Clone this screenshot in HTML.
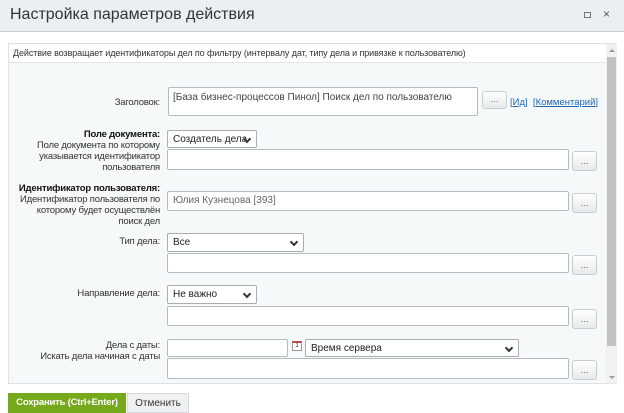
<!DOCTYPE html><html><head><meta charset="utf-8"><style>
*{box-sizing:border-box;margin:0;padding:0}
body{width:624px;height:409px;overflow:hidden;background:#fff;font-family:"Liberation Sans",sans-serif;font-size:11px;color:#333;position:relative}
.a{position:absolute}
.hd{left:0;top:0;width:624px;height:32px;background:#eaeff1;border-bottom:1px solid #c9d0d3}
.ttl{left:10px;top:6px;font-size:16px;color:#333}
.panel{left:8px;top:43px;width:609px;height:341px;background:#f6f9f9;border:1px solid #dfe3e5}
.desc{left:0;top:0;width:597px;height:19px;background:#fff;border-bottom:1px solid #e2e6e8;font-size:9px;padding:4px 4px;color:#333;letter-spacing:-0.1px}
.ta{background:#fff;border:1px solid #b5bcc0;border-radius:2px}
.sel{background:#fff;border:1px solid #a8aeb2;border-radius:2px;font-size:10px;padding:3px 5px;color:#222}
.sel:after{content:"";position:absolute;right:6px;top:5px;width:4px;height:4px;border-right:2px solid #333;border-bottom:2px solid #333;transform:rotate(45deg)}
.btn{background:linear-gradient(#fff,#e6e9ea);border:1px solid #c8cdd0;border-radius:3px;font-size:9px;text-align:center;color:#666;line-height:14px}
.lb{text-align:right;font-size:9.5px;line-height:11px;color:#333;width:144px;left:16px;letter-spacing:-0.2px}
b{color:#111}
</style></head><body>
<div class="a hd"></div>
<div class="a ttl">Настройка параметров действия</div>
<div class="a" style="left:584px;top:12px;width:7px;height:6px;border:1px solid #777"></div>
<div class="a" style="left:603px;top:7px;font-size:12px;color:#555">×</div>
<div class="a panel">
<div class="a desc">Действие возвращает идентификаторы дел по фильтру (интервалу дат, типу дела и привязке к пользователю)</div>
<div class="a" style="left:597px;top:0;width:11px;height:339px;background:#f1f1f1"></div>
<div class="a" style="left:598px;top:13px;width:9px;height:289px;background:#c1c1c1"></div>
<div class="a" style="left:600px;top:5px;border:3px solid transparent;border-bottom:3px solid #999;border-top:0"></div>
<div class="a" style="left:600px;top:332px;border:3px solid transparent;border-top:3px solid #999;border-bottom:0"></div>
</div>
<div class="a lb" style="top:97px">Заголовок:</div>
<div class="a ta" style="left:168px;top:87px;width:310px;height:29px;padding:4px;font-size:10px;color:#444">[База бизнес-процессов Пинол] Поиск дел по пользователю</div>
<div class="a btn" style="left:482px;top:91px;width:25px;height:18px">...</div>
<div class="a" style="left:510px;top:97px;font-size:9.5px;color:#2067b0">[<u>Ид</u>] &nbsp;[<u>Комментарий</u>]</div>

<div class="a lb" style="top:129px"><b>Поле документа:</b><br>Поле документа по которому указывается идентификатор пользователя</div>
<div class="a sel" style="left:167px;top:130px;width:90px;height:18px">Создатель дела</div>
<div class="a ta" style="left:167px;top:149px;width:402px;height:21px"></div>
<div class="a btn" style="left:572px;top:151px;width:25px;height:20px;line-height:18px">...</div>

<div class="a lb" style="top:183px"><b>Идентификатор пользователя:</b><br>Идентификатор пользователя по которому будет осуществлён поиск дел</div>
<div class="a ta" style="left:167px;top:191px;width:402px;height:20px;padding:3px 5px;font-size:10px;color:#666">Юлия Кузнецова [393]</div>
<div class="a btn" style="left:572px;top:193px;width:25px;height:20px;line-height:18px">...</div>

<div class="a lb" style="top:236px">Тип дела:</div>
<div class="a sel" style="left:167px;top:233px;width:137px;height:19px">Все</div>
<div class="a ta" style="left:167px;top:253px;width:402px;height:20px"></div>
<div class="a btn" style="left:572px;top:255px;width:25px;height:20px;line-height:18px">...</div>

<div class="a lb" style="top:288px">Направление дела:</div>
<div class="a sel" style="left:167px;top:285px;width:90px;height:19px">Не важно</div>
<div class="a ta" style="left:167px;top:306px;width:402px;height:20px"></div>
<div class="a btn" style="left:572px;top:309px;width:25px;height:20px;line-height:18px">...</div>

<div class="a lb" style="top:340px">Дела с даты:<br>Искать дела начиная с даты</div>
<div class="a ta" style="left:167px;top:339px;width:121px;height:18px"></div>
<div class="a" style="left:292px;top:341px;width:10px;height:10px;border:1px solid #999;border-top:2px solid #c44;background:#fff;font-size:6px;text-align:center;line-height:7px;color:#235">1</div>
<div class="a sel" style="left:305px;top:339px;width:214px;height:18px">Время сервера</div>
<div class="a ta" style="left:167px;top:358px;width:402px;height:21px"></div>
<div class="a btn" style="left:572px;top:360px;width:25px;height:20px;line-height:18px">...</div>

<div class="a" style="left:8px;top:393px;width:118px;height:20px;background:#76a81b;color:#fff;font-size:9.5px;font-weight:bold;padding-top:4px;text-align:center;letter-spacing:-0.2px">Сохранить (Ctrl+Enter)</div>
<div class="a" style="left:127px;top:393px;width:62px;height:20px;background:#eef1f2;border:1px solid #d6dadc;color:#333;font-size:10px;padding-top:4px;text-align:center">Отменить</div>
</body></html>
